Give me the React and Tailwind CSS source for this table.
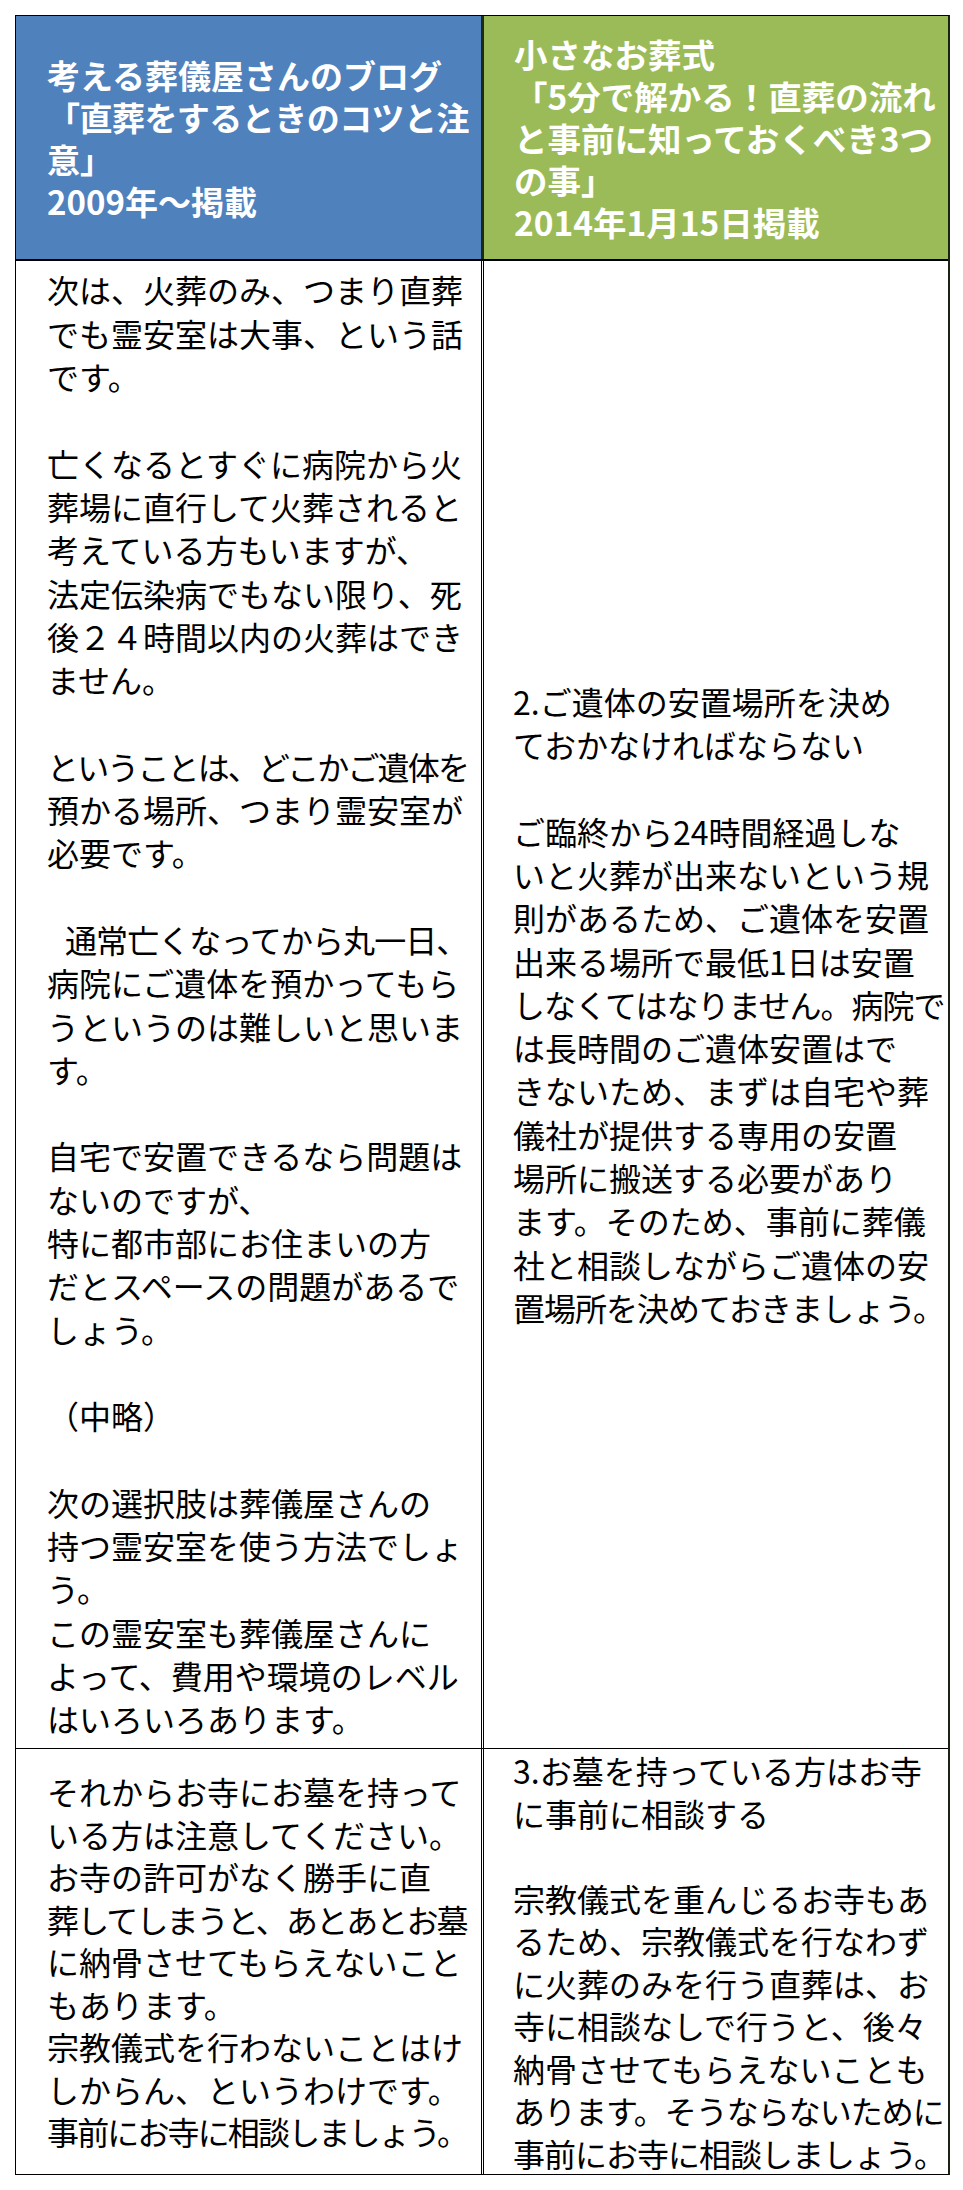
import React from 'react';

const headerLeft = [
  '考える葬儀屋さんのブログ',
  '「直葬をするときのコツと注',
  '意」',
  '2009年～掲載',
];

const headerRight = [
  '小さなお葬式',
  '「5分で解かる！直葬の流れ',
  'と事前に知っておくべき3つ',
  'の事」',
  '2014年1月15日掲載',
];

// lines starting with '>' get a small indent
const row1Left = [
  '次は、火葬のみ、つまり直葬',
  'でも霊安室は大事、という話',
  'です。',
  '',
  '亡くなるとすぐに病院から火',
  '葬場に直行して火葬されると',
  '考えている方もいますが、',
  '法定伝染病でもない限り、死',
  '後２４時間以内の火葬はでき',
  'ません。',
  '',
  'ということは、どこかご遺体を',
  '預かる場所、つまり霊安室が',
  '必要です。',
  '',
  '>通常亡くなってから丸一日、',
  '病院にご遺体を預かってもら',
  'うというのは難しいと思いま',
  'す。',
  '',
  '自宅で安置できるなら問題は',
  'ないのですが、',
  '特に都市部にお住まいの方',
  'だとスペースの問題があるで',
  'しょう。',
  '',
  '（中略）',
  '',
  '次の選択肢は葬儀屋さんの',
  '持つ霊安室を使う方法でしょ',
  'う。',
  'この霊安室も葬儀屋さんに',
  'よって、費用や環境のレベル',
  'はいろいろあります。',
];

const row1Right = [
  '2.ご遺体の安置場所を決め',
  'ておかなければならない',
  '',
  'ご臨終から24時間経過しな',
  'いと火葬が出来ないという規',
  '則があるため、ご遺体を安置',
  '出来る場所で最低1日は安置',
  'しなくてはなりません。病院で',
  'は長時間のご遺体安置はで',
  'きないため、まずは自宅や葬',
  '儀社が提供する専用の安置',
  '場所に搬送する必要があり',
  'ます。そのため、事前に葬儀',
  '社と相談しながらご遺体の安',
  '置場所を決めておきましょう。',
];

const row2Left = [
  'それからお寺にお墓を持って',
  'いる方は注意してください。',
  'お寺の許可がなく勝手に直',
  '葬してしまうと、あとあとお墓',
  'に納骨させてもらえないこと',
  'もあります。',
  '宗教儀式を行わないことはけ',
  'しからん、というわけです。',
  '事前にお寺に相談しましょう。',
];

const row2Right = [
  '3.お墓を持っている方はお寺',
  'に事前に相談する',
  '',
  '宗教儀式を重んじるお寺もあ',
  'るため、宗教儀式を行なわず',
  'に火葬のみを行う直葬は、お',
  '寺に相談なしで行うと、後々',
  '納骨させてもらえないことも',
  'あります。そうならないために',
  '事前にお寺に相談しましょう。',
];

// rough em width of a line (half-width chars count ~0.55)
const emWidth = (s) => [...s].reduce((w, c) => w + (c.charCodeAt(0) < 128 ? 0.55 : 1), 0);

function Lines({ lines, size, maxWidth, className }) {
  return (
    <div className={className}>
      {lines.map((raw, i) => {
        const indent = raw.startsWith('>');
        const line = indent ? raw.slice(1) : raw;
        const avail = maxWidth - (indent ? 18 : 0);
        const natural = emWidth(line) * size;
        const n = [...line].length;
        const spacing = natural > avail && n ? (avail - natural) / n : 0;
        return (
          <div
            key={i}
            className={indent ? 'whitespace-pre pl-[18px]' : 'whitespace-pre'}
            style={spacing ? { letterSpacing: `${spacing}px` } : undefined}
          >
            {line || '\u00a0'}
          </div>
        );
      })}
    </div>
  );
}

export default function App() {
  return (
    <div className="w-[963px] h-[2190px] bg-white pt-[15px] pl-[15px] font-['Noto_Sans_CJK_JP',sans-serif]">
      <div className="w-[935px] border border-black border-r-2 border-r-[#1b2412]">
        {/* Header */}
        <div className="flex h-[245px] border-b-2 border-black">
          <div className="w-[465px] bg-[#4f81bd] flex flex-col justify-center pl-[31px]">
            <Lines lines={headerLeft} size={33} maxWidth={422} className="text-white font-bold text-[33px] leading-[42px]" />
          </div>
          <div className="w-[3px] bg-[#1d2a18]" />
          <div className="flex-1 bg-[#9bbb59] flex flex-col justify-center pl-[30px]">
            <Lines lines={headerRight} size={33.5} maxWidth={432} className="text-white font-bold text-[33.5px] leading-[42px]" />
          </div>
        </div>

        {/* Row 1 */}
        <div className="flex h-[1488px] border-b border-black">
          <div className="w-[466px] border-r border-black flex flex-col justify-center pl-[31px]">
            <Lines lines={row1Left} size={32} maxWidth={422} className="text-black text-[32px] leading-[43.3px]" />
          </div>
          <div className="w-[1px]" />
          <div className="flex-1 border-l border-black flex flex-col justify-center pl-[29px]">
            <Lines lines={row1Right} size={32} maxWidth={434} className="text-black text-[32px] leading-[43.3px]" />
          </div>
        </div>

        {/* Row 2 */}
        <div className="flex h-[425px]">
          <div className="w-[466px] border-r border-black flex flex-col justify-center pl-[31px]">
            <Lines lines={row2Left} size={32} maxWidth={422} className="text-black text-[32px] leading-[42.5px]" />
          </div>
          <div className="w-[1px]" />
          <div className="flex-1 border-l border-black flex flex-col justify-center pl-[29px]">
            <Lines lines={row2Right} size={32} maxWidth={434} className="text-black text-[32px] leading-[42.5px]" />
          </div>
        </div>
      </div>
    </div>
  );
}
